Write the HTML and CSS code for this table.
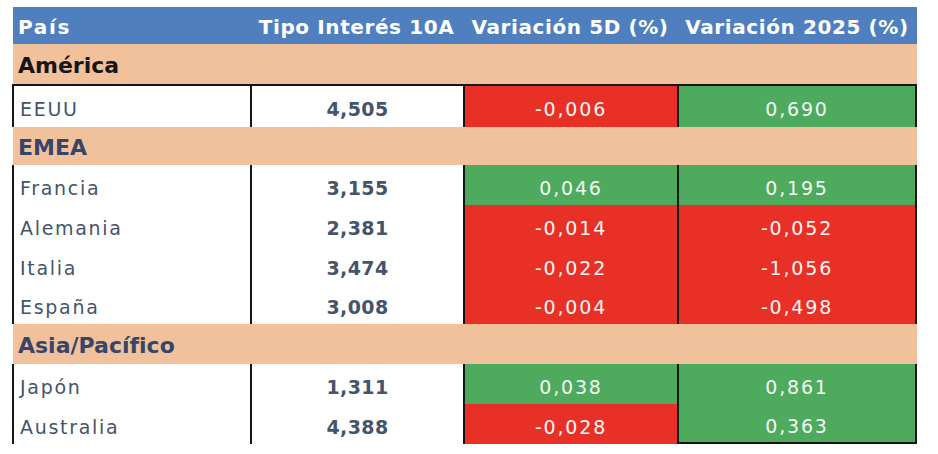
FILE: index.html
```html
<!DOCTYPE html>
<html lang="es">
<head>
<meta charset="utf-8">
<title>Tipos de interés 10A</title>
<link rel="stylesheet" href="styles.css">
</head>
<body>
<div class="sheet">
  <div class="row head">
    <div class="c name">País</div>
    <div class="c">Tipo Interés 10A</div>
    <div class="c">Variación 5D (%)</div>
    <div class="c">Variación 2025 (%)</div>
  </div>

  <div class="cat cat-black">América</div>
  <div class="row data top-line">
    <div class="c name">EEUU</div>
    <div class="c rate">4,505</div>
    <div class="c val neg">-0,006</div>
    <div class="c val pos">0,690</div>
  </div>

  <div class="cat short">EMEA</div>
  <div class="row data">
    <div class="c name">Francia</div>
    <div class="c rate">3,155</div>
    <div class="c val pos">0,046</div>
    <div class="c val pos">0,195</div>
  </div>
  <div class="row data">
    <div class="c name">Alemania</div>
    <div class="c rate">2,381</div>
    <div class="c val neg">-0,014</div>
    <div class="c val neg">-0,052</div>
  </div>
  <div class="row data">
    <div class="c name">Italia</div>
    <div class="c rate">3,474</div>
    <div class="c val neg">-0,022</div>
    <div class="c val neg">-1,056</div>
  </div>
  <div class="row data short">
    <div class="c name">España</div>
    <div class="c rate">3,008</div>
    <div class="c val neg">-0,004</div>
    <div class="c val neg">-0,498</div>
  </div>

  <div class="cat">Asia/Pacífico</div>
  <div class="row data">
    <div class="c name">Japón</div>
    <div class="c rate">1,311</div>
    <div class="c val pos">0,038</div>
    <div class="c val pos">0,861</div>
  </div>
  <div class="row data last">
    <div class="c name">Australia</div>
    <div class="c rate">4,388</div>
    <div class="c val neg">-0,028</div>
    <div class="c val pos">0,363</div>
  </div>
</div>
</body>
</html>
```

FILE: styles.css
```css
html, body {
  margin: 0;
  padding: 0;
  background: #ffffff;
}

body {
  font-family: "DejaVu Sans", "Liberation Sans", sans-serif;
}

.sheet {
  width: 905px;
  padding: 7px 0 0 12px;
}

.row {
  display: grid;
  grid-template-columns: 238px 213px 214px 240px;
  height: 40px;
}

.c {
  display: flex;
  align-items: center;
  justify-content: center;
  box-sizing: border-box;
  white-space: nowrap;
}

.c.name {
  justify-content: flex-start;
  padding-left: 6px;
}

/* header */
.head {
  height: 37px;
  margin-left: 1px;
  grid-template-columns: 237px 213px 214px 240px;
  background: #4f7fbe;
  color: #ffffff;
  font-weight: bold;
  font-size: 20px;
  letter-spacing: 0.6px;
}

.head .c {
  padding-top: 2px;
}

.head .c.name {
  padding-left: 5px;
}

/* category rows */
.cat {
  height: 40px;
  margin-left: 1px;
  background: #f1c19b;
  color: #37456a;
  font-weight: bold;
  font-size: 22px;
  display: flex;
  align-items: center;
  padding-left: 5px;
  padding-top: 2px;
  box-sizing: border-box;
}

.cat.cat-black {
  color: #161616;
}

.cat.short {
  height: 38px;
}

/* data rows */
.data {
  font-size: 19px;
  color: #44546a;
}

.data .c {
  padding-top: 5px;
}

.data .c:first-child {
  border-left: 2px solid #161616;
}

.data .c + .c {
  border-left: 2px solid #161616;
}

.data .c:last-child {
  border-right: 2px solid #161616;
}

.data.top-line {
  height: 41px;
  border-top: 2px solid #161616;
}

.data.short {
  height: 39px;
}

.name {
  letter-spacing: 1.7px;
}

.rate {
  font-weight: bold;
  letter-spacing: 0.4px;
}

.val {
  color: #fbf6f4;
  letter-spacing: 1.8px;
}

.neg {
  background: #e93026;
}

.pos {
  background: #4eaa5c;
  color: #f2fbf4;
}

.data.last .c:last-child {
  border-bottom: 2px solid #161616;
}
```
